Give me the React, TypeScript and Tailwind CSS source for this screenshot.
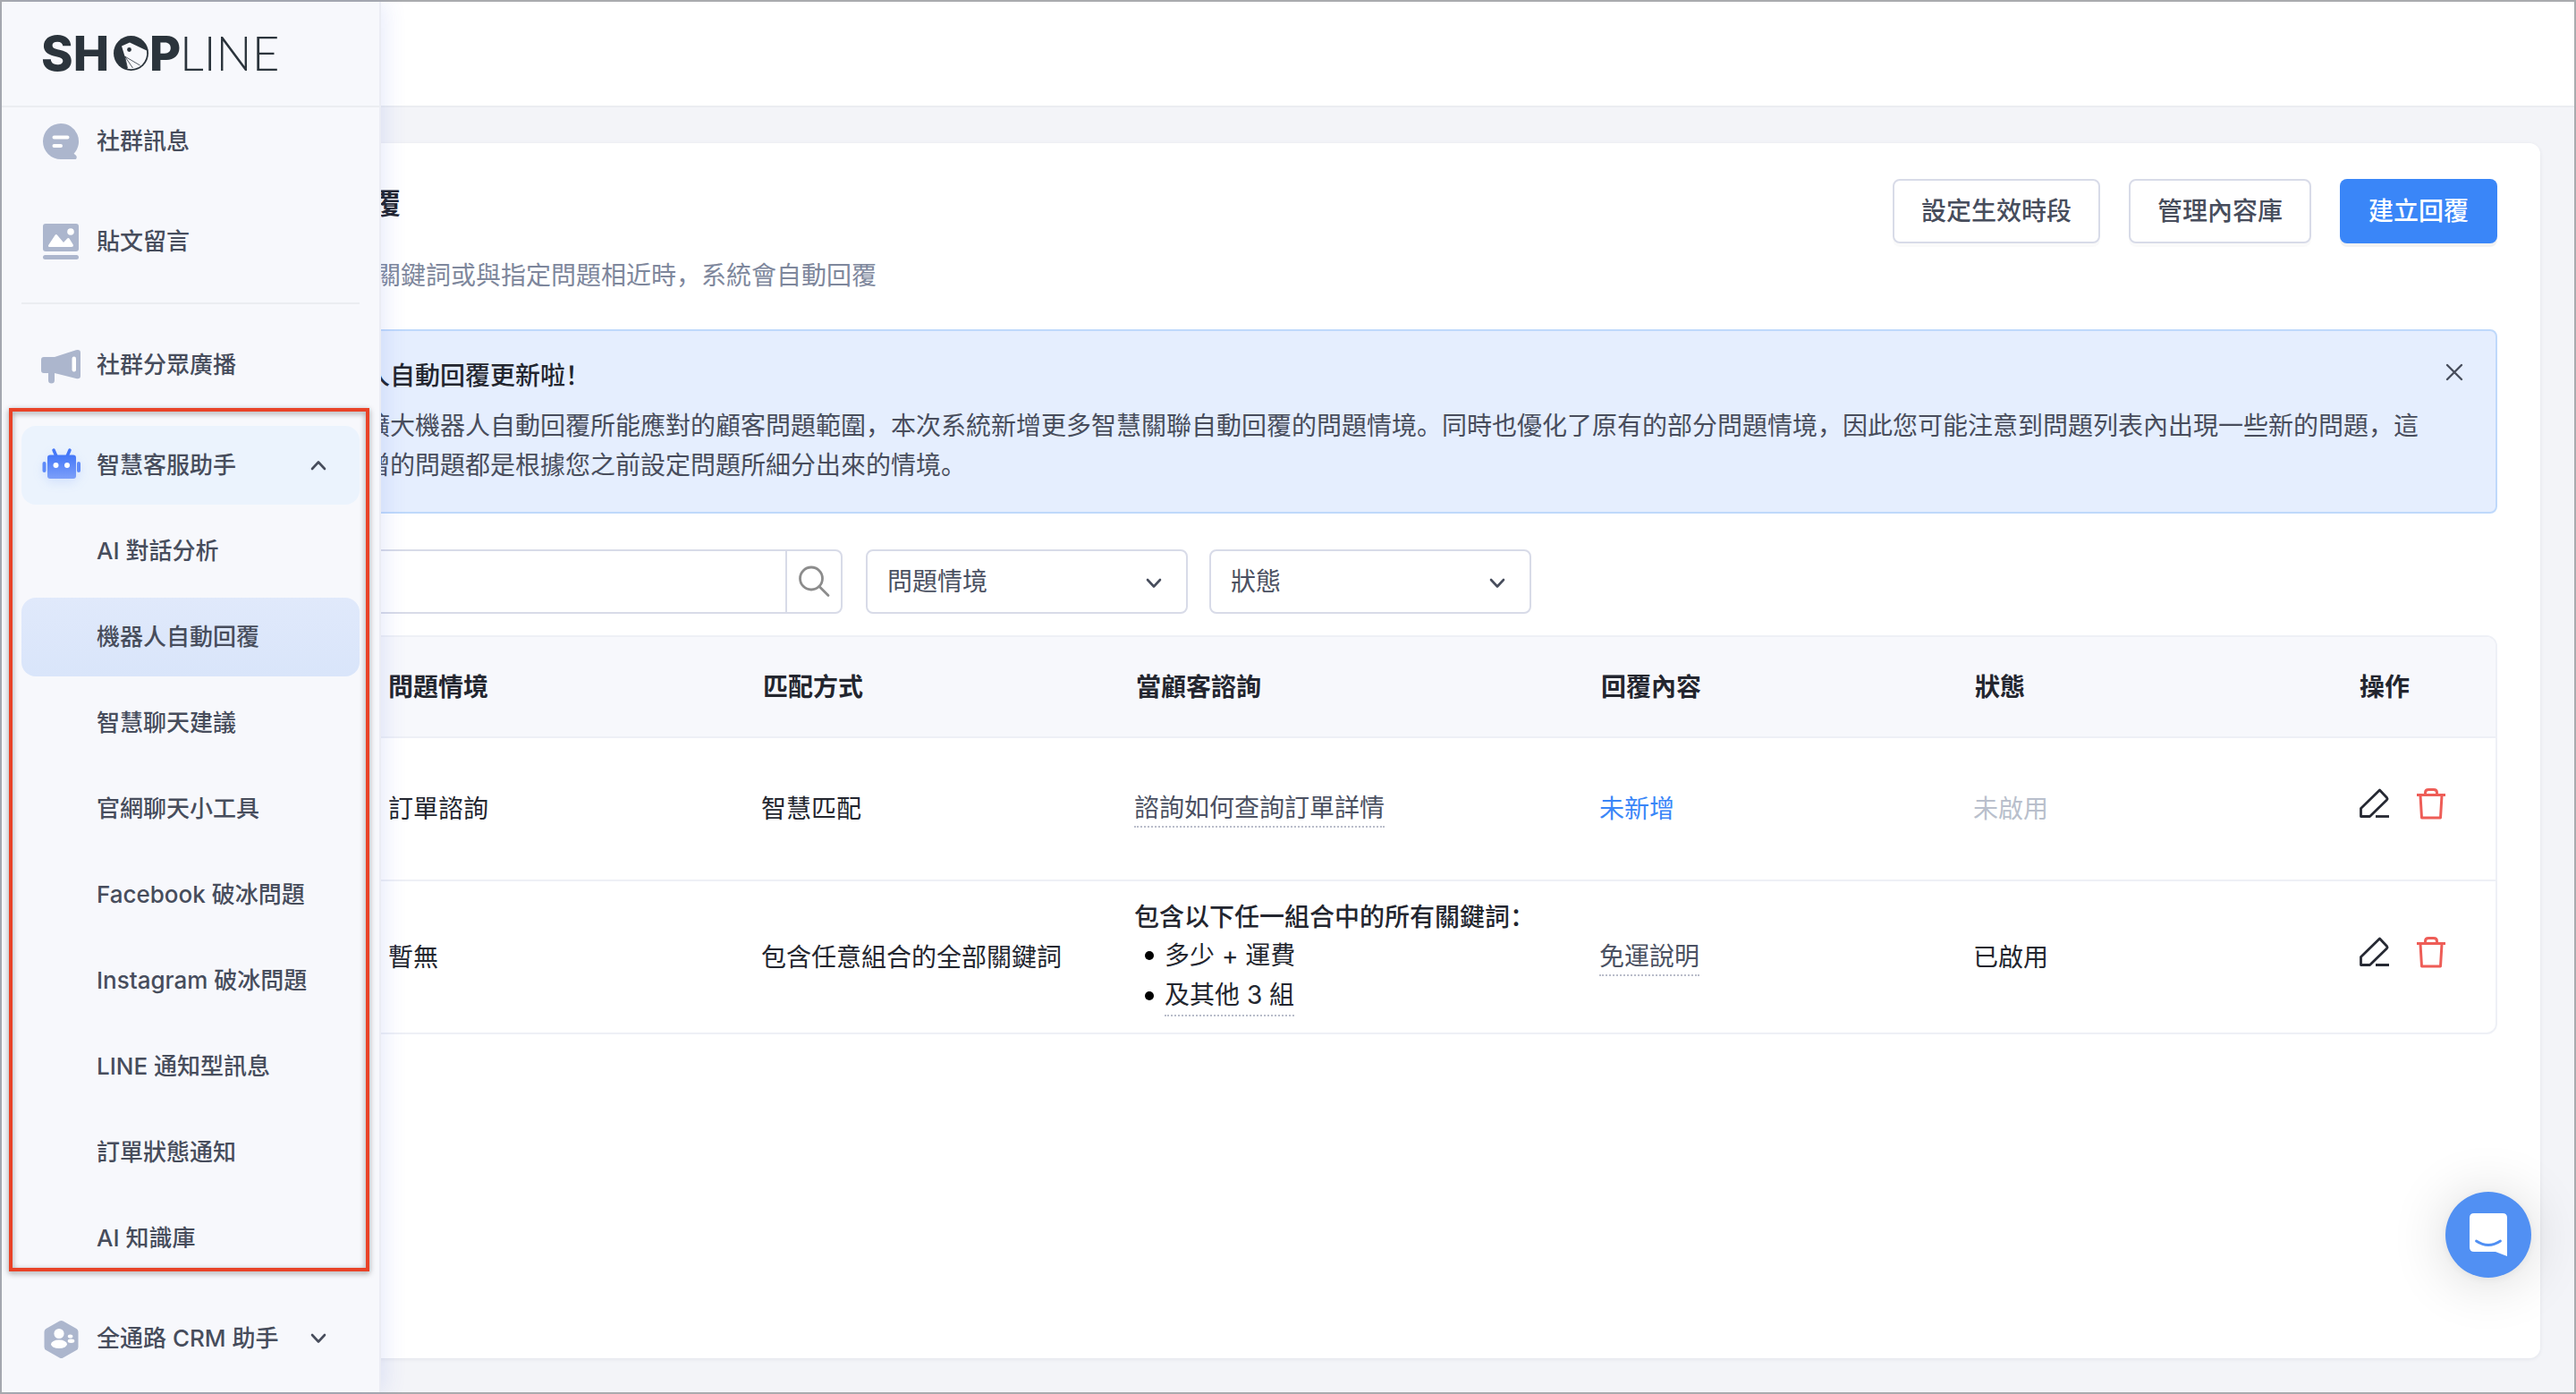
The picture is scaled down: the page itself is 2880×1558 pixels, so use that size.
import React from 'react';

const subItems = [
  'AI 對話分析',
  '機器人自動回覆',
  '智慧聊天建議',
  '官網聊天小工具',
  'Facebook 破冰問題',
  'Instagram 破冰問題',
  'LINE 通知型訊息',
  '訂單狀態通知',
  'AI 知識庫',
];

const activeItem = '機器人自動回覆';

const Logo = () => (
  <svg width="290" height="84" viewBox="0 1 290 84" fill="#2b343c" role="img" aria-label="SHOPLINE">
    <text x="2" y="62" fontSize="54" fontWeight="800" className="font-['Inter',sans-serif]">SH</text>
    <circle cx="102.5" cy="42.500" r="19.5" />
    <path d="M92 34.500 101 30.500 120 39.500A17.8 17.8 0 0 1 98.500 59.800L95.500 46Z" fill="#f7f8fc" />
    <circle cx="100.500" cy="38.500" r="2.400" />
    <path d="M95.500 46 112.500 56M95.500 46 104.500 59M95.500 46 98.500 59" stroke="#2b343c" strokeWidth="0.8" fill="none" />
    <text x="123" y="62" fontSize="54" fontWeight="800" className="font-['Inter',sans-serif]">P</text>
    <text x="157" y="62" fontSize="53" fontWeight="300" className="font-['Lato',sans-serif]">LINE</text>
  </svg>
);

const MessageIcon = () => (
  <svg className="size-11 shrink-0" viewBox="0 0 44 44" fill="#acb6cd">
    <path d="M22 2a20 20 0 0 1 14.6 33.7l2.4 2c1.4 1.4.8 4.3-1.2 4.3H22A20 20 0 0 1 22 2Z" />
    <path d="M14.5 17.5h15M14.5 27H22" stroke="#fff" strokeWidth="4" strokeLinecap="round" />
  </svg>
);

const PostIcon = () => (
  <svg className="size-11 shrink-0" viewBox="0 0 44 44" fill="#acb6cd">
    <rect x="2" y="2" width="40" height="31" rx="3" />
    <rect x="2" y="37" width="40" height="5" rx="2.5" />
    <circle cx="33" cy="11" r="3.8" fill="#fff" />
    <path d="M8.5 25.5 15.4 15q1.4-2 2.8 0l6.8 8 4-4.3q1.4-1.4 2.6 0l4.2 6.8q.6 2.5-2 2.5H9.500q-2.500 0-1-2.500Z" fill="#fff" />
  </svg>
);

const MegaphoneIcon = () => (
  <svg className="size-11 shrink-0" viewBox="0 0 44 44" fill="#acb6cd">
    <path d="M3 13h12L39 5.200q5-1 5 3V34q0 4-5 3L15 31v8a3.500 3.500 0 0 1-7 0v-8H3q-3 0-3-3V16q0-3 3-3Z" />
    <rect x="34.5" y="12.500" width="4.500" height="17" rx="2.200" fill="#fff" />
  </svg>
);

const RobotIcon = () => (
  <svg className="size-11 shrink-0 drop-shadow-[0_4px_6px_rgba(66,120,250,0.15)]" viewBox="0 0 44 44">
    <defs>
      <linearGradient id="robot" x1="0" y1="0" x2="0" y2="1">
        <stop offset="0" stopColor="#4477f8" />
        <stop offset="1" stopColor="#7c9ff9" />
      </linearGradient>
    </defs>
    <path d="m14 5 3 7M32 5l-3 7" stroke="#4477f8" strokeWidth="3.500" strokeLinecap="round" />
    <rect x="7" y="10.500" width="32" height="26.500" rx="3" fill="url(#robot)" />
    <rect x="1.500" y="18" width="4" height="12" rx="2" fill="#5f8bf9" />
    <rect x="40" y="18" width="4" height="12" rx="2" fill="#5f8bf9" />
    <circle cx="16.500" cy="22" r="3" fill="#fff" />
    <circle cx="29" cy="22" r="3" fill="#fff" />
  </svg>
);

const CrmIcon = () => (
  <svg className="size-11 shrink-0" viewBox="0 0 44 44" fill="#acb6cd">
    <path d="M20.500 2.600q2-1.200 4 0L39.500 11q2 1.200 2 3.500v17q0 2.300-2 3.500l-15 8.500q-2 1-4 0L5.500 35q-2-1.200-2-3.500v-17q0-2.300 2-3.500Z" />
    <g fill="#fff">
      <circle cx="20" cy="16.500" r="5.600" />
      <ellipse cx="20" cy="28.300" rx="9" ry="4.800" />
      <ellipse cx="32.600" cy="19.600" rx="2.800" ry="2" />
      <ellipse cx="33.500" cy="24.800" rx="3.800" ry="2.200" />
    </g>
  </svg>
);

const Chevron = ({ up = false, className = '' }: { up?: boolean; className?: string }) => (
  <svg className={className} width="20" height="20" viewBox="0 0 20 20" fill="none" stroke="#474d5c" strokeWidth="2.600" strokeLinecap="round" strokeLinejoin="round">
    <path d={up ? 'm3 14 7-7.500 7 7.500' : 'm3 6 7 7.500L17 6'} />
  </svg>
);

const SearchIcon = () => (
  <svg width="36" height="36" viewBox="0 0 36 36" fill="none" stroke="#8c8c8c" strokeWidth="2.800" strokeLinecap="round">
    <circle cx="15" cy="14.500" r="12.500" />
    <path d="m24 23.500 10 10" />
  </svg>
);

const PencilIcon = () => (
  <svg width="36" height="36" viewBox="0 0 36 36" fill="none" stroke="#262933" strokeWidth="2.800" strokeLinejoin="round">
    <path d="m24.500 3 8 8.500q1 1.200 0 2.400L13.500 32.500H3.500V23.500Z" />
    <path d="M20 32.500h15" />
  </svg>
);

const TrashIcon = () => (
  <svg width="36" height="36" viewBox="0 0 36 36" fill="none" stroke="#ee5d57" strokeWidth="3" strokeLinejoin="round">
    <path d="M2 8.500h32M11.500 8V6q0-3.600 3.600-3.600h5.800q3.600 0 3.600 3.600v2" />
    <path d="m6 9 1.500 25h21L30 9" />
  </svg>
);

const NavItem = ({ icon, label }: { icon: React.ReactNode; label: string }) => (
  <a href="#" className="flex h-22 items-center gap-[18px] rounded-2xl pl-[22px]">
    {icon}
    {label}
  </a>
);

const Sidebar = () => (
  <aside className="absolute inset-y-0 left-0 z-10 flex w-[424px] flex-col border-r-2 border-[#ebedf4] bg-[#f7f8fc] shadow-[4px_0_24px_rgba(59,91,219,0.12)]">
    <div className="z-10 flex h-[118px] shrink-0 items-center border-b-2 border-[#ebedf1] bg-[#f7f8fc] pl-[42px]">
      <Logo />
    </div>
    <nav className="-mt-1.5 flex flex-col gap-6 px-[22px] text-[26px] leading-10 font-medium text-[#474d5c]">
      <NavItem icon={<MessageIcon />} label="社群訊息" />
      <NavItem icon={<PostIcon />} label="貼文留言" />
      <hr className="border-t-2 border-[#ebedf1]" />
      <NavItem icon={<MegaphoneIcon />} label="社群分眾廣播" />

      <div className="relative flex flex-col gap-2">
        <button className="flex h-22 items-center gap-[18px] rounded-2xl bg-[#ebf3fd] pr-9 pl-[22px] text-left">
          <RobotIcon />
          <span className="flex-1">智慧客服助手</span>
          <Chevron up />
        </button>
        {subItems.map((item) => (
          <a
            key={item}
            href="#"
            className={`flex h-22 items-center rounded-2xl pl-21 ${item === activeItem ? 'bg-linear-to-b from-[#e0e9fb] to-[#d9e5fa]' : ''}`}
          >
            {item}
          </a>
        ))}
        <div className="pointer-events-none absolute -top-5 -right-[11px] bottom-[7px] -left-3.5 border-4 border-[#e94227] drop-shadow-[0_2px_3px_rgba(0,0,0,0.4)]" />
      </div>

      <button className="flex h-22 items-center gap-[18px] rounded-2xl pr-9 pl-[22px] text-left">
        <CrmIcon />
        <span className="flex-1">全通路 CRM 助手</span>
        <Chevron />
      </button>
    </nav>
  </aside>
);

const FilterSelect = ({ label }: { label: string }) => (
  <div className="relative">
    <select aria-label={label} className="h-18 w-[360px] appearance-none rounded-lg border-2 border-[#d8dbe8] bg-white pl-[22px] text-[#4b5162]">
      <option>{label}</option>
    </select>
    <Chevron className="pointer-events-none absolute top-7 right-7" />
  </div>
);

const RowActions = () => (
  <div className="flex gap-7 pb-3">
    <button aria-label="編輯"><PencilIcon /></button>
    <button aria-label="刪除"><TrashIcon /></button>
  </div>
);

const dotted = 'inline-block border-b-2 border-dotted border-[#b9bdca]';

const ReplyTable = () => (
  <div className="mt-6 overflow-hidden rounded-xl border-2 border-[#eef0f6]">
    <table className="w-full table-fixed text-left leading-10 text-[#23262f]">
      <colgroup>
        <col className="w-[176px]" />
        <col className="w-[417px]" />
        <col className="w-[417px]" />
        <col className="w-[520px]" />
        <col className="w-[418px]" />
        <col className="w-[430px]" />
        <col />
      </colgroup>
      <thead>
        <tr className="h-28 border-b-2 border-[#eef0f6] bg-[#f7f8fc]">
          <th />
          <th className="pl-8 font-semibold">問題情境</th>
          <th className="pl-[34px] font-semibold">匹配方式</th>
          <th className="pl-[34px] font-semibold">當顧客諮詢</th>
          <th className="pl-[34px] font-semibold">回覆內容</th>
          <th className="pl-[34px] font-semibold">狀態</th>
          <th className="pl-[34px] font-semibold">操作</th>
        </tr>
      </thead>
      <tbody>
        <tr className="h-40 border-b-2 border-[#eef0f6]">
          <td />
          <td className="pl-8">訂單諮詢</td>
          <td className="pl-8">智慧匹配</td>
          <td className="pl-8"><span className={`${dotted} text-[#4b5162]`}>諮詢如何查詢訂單詳情</span></td>
          <td className="pl-8"><a href="#" className="text-[#3a86f8]">未新增</a></td>
          <td className="pl-8 text-[#b9bfcc]">未啟用</td>
          <td className="pl-8"><RowActions /></td>
        </tr>
        <tr className="h-[170px]">
          <td />
          <td className="pl-8">暫無</td>
          <td className="pl-8">包含任意組合的全部關鍵詞</td>
          <td className="pl-8">
            <p className="leading-[42px] font-medium">包含以下任一組合中的所有關鍵詞：</p>
            <ul className="leading-[44px]">
              <li className="flex items-center gap-3 pl-3"><i className="size-2.5 rounded-full bg-black" />多少 + 運費</li>
              <li className="flex items-center gap-3 pl-3"><i className="size-2.5 rounded-full bg-black" /><span className={dotted}>及其他 3 組</span></li>
            </ul>
          </td>
          <td className="pl-8"><span className={`${dotted} text-[#4b5162]`}>免運說明</span></td>
          <td className="pl-8">已啟用</td>
          <td className="pl-8"><RowActions /></td>
        </tr>
      </tbody>
    </table>
  </div>
);

const App = () => {
  return (
    <div className="relative flex min-h-screen flex-col border-2 border-[#a9abae] bg-[#f3f4f8] font-['Inter','Noto_Sans_CJK_SC',sans-serif] text-[28px] leading-10 text-[#23262f]">
      <Sidebar />
      <header className="h-[118px] border-b-2 border-[#ebedf1] bg-white" />

      <main className="flex flex-1 flex-col pt-10 pr-[38px] pb-[38px] pl-[174px]">
        <section className="flex-1 rounded-xl bg-white px-12 py-10 shadow-[0_1px_4px_rgba(30,40,80,0.08)]">
          {/* Title and actions */}
          <div className="flex items-start justify-between">
            <div>
              <h1 className="text-[32px] leading-14 font-bold">機器人自動回覆</h1>
              <p className="mt-8 text-[#7e879c]">當顧客訊息包含關鍵詞或與指定問題相近時，系統會自動回覆</p>
            </div>
            <div className="flex gap-8 font-medium text-[#474d5c]">
              <button className="h-18 rounded-lg border-2 border-[#d8dbe8] bg-white px-[30px] shadow-[0_4px_0_rgba(0,0,0,0.02)]">設定生效時段</button>
              <button className="h-18 rounded-lg border-2 border-[#d8dbe8] bg-white px-[30px] shadow-[0_4px_0_rgba(0,0,0,0.02)]">管理內容庫</button>
              <button className="h-18 rounded-lg bg-[#3a86f8] px-8 text-white shadow-[0_4px_0_rgba(0,0,0,0.05)]">建立回覆</button>
            </div>
          </div>

          {/* Update notice */}
          <div className="mt-10 flex items-start rounded-lg border-2 border-[#bfd9fb] bg-[#e5eefe] py-[30px] pr-9 pl-[126px]">
            <div className="flex-1">
              <h2 className="font-medium">機器人自動回覆更新啦！</h2>
              <p className="mt-3.5 leading-[44px] text-[#484d5c]">
                為了擴大機器人自動回覆所能應對的顧客問題範圍，本次系統新增更多智慧關聯自動回覆的問題情境。同時也優化了原有的部分問題情境，因此您可能注意到問題列表內出現一些新的問題，這些新增的問題都是根據您之前設定問題所細分出來的情境。
              </p>
            </div>
            <button aria-label="關閉" className="ml-5 pt-1.5">
              <svg width="20" height="20" viewBox="0 0 20 20" fill="none" stroke="#474d5c" strokeWidth="2.400" strokeLinecap="round">
                <path d="m2 2 16 16M18 2 2 18" />
              </svg>
            </button>
          </div>

          {/* Filters */}
          <div className="mt-10 flex gap-[26px]">
            <div className="flex h-18 w-[718px] rounded-lg border-2 border-[#d8dbe8] bg-white">
              <input type="text" aria-label="搜尋" className="min-w-0 flex-1 px-6 outline-none" />
              <button aria-label="搜尋" className="flex w-[62px] items-center justify-center border-l-2 border-[#d8dbe8]">
                <SearchIcon />
              </button>
            </div>
            <div className="flex gap-6">
              <FilterSelect label="問題情境" />
              <FilterSelect label="狀態" />
            </div>
          </div>

          <ReplyTable />
        </section>
      </main>

      <button aria-label="聊天" className="fixed right-[50px] bottom-[130px] flex size-24 items-center justify-center rounded-full bg-[#5190f3] shadow-[0_2px_12px_rgba(0,0,0,0.06),0_4px_64px_rgba(0,0,0,0.16)]">
        <svg width="42" height="48" viewBox="0 0 42 48">
          <path d="M5 0h32q5 0 5 5v43l-13-5H5q-5 0-5-5V5q0-5 5-5Z" fill="#fff" />
          <path d="M7.500 31q13.500 9 27 0" fill="none" stroke="#5190f3" strokeWidth="2.800" strokeLinecap="round" />
        </svg>
      </button>
    </div>
  );
};

export default App;
